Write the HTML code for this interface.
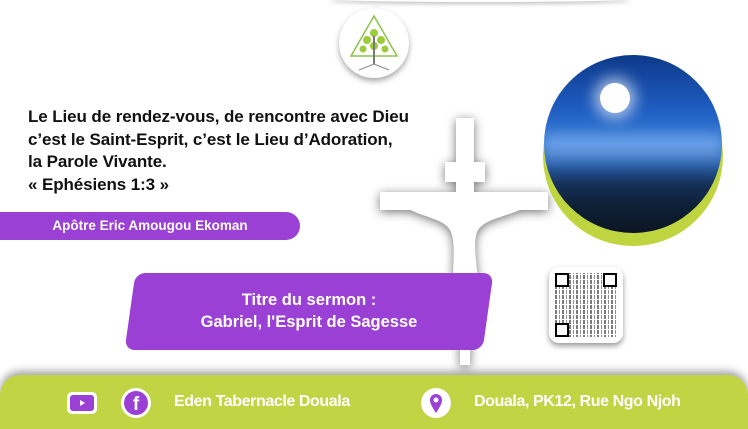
<!DOCTYPE html>
<html><head><meta charset="utf-8"><style>
body{margin:0;width:748px;height:429px;overflow:hidden;background:#fff;font-family:"Liberation Sans",sans-serif;position:relative}
.a{position:absolute}
.q{font-weight:bold;font-size:17px;color:#111;left:28px;line-height:22.5px;top:106px;letter-spacing:-.1px}
</style></head><body>
<div class="a" style="left:330px;top:-4px;width:300px;height:6px;border-radius:50%;box-shadow:0 2px 4px rgba(0,0,0,.25)"></div>
<div class="a" style="left:339px;top:8px;width:70px;height:70px;border-radius:50%;background:#fff;box-shadow:0 3px 6px rgba(0,0,0,.35)">
<svg width="70" height="70"><polygon points="35,8 58,48 12,48" fill="none" stroke="#8bc34a" stroke-width="1.5"/>
<circle cx="35" cy="25" r="4" fill="#9ccc3a"/><circle cx="28" cy="32" r="4" fill="#9ccc3a"/><circle cx="42" cy="32" r="4" fill="#9ccc3a"/><circle cx="24" cy="41" r="3.5" fill="#9ccc3a"/><circle cx="35" cy="38" r="4" fill="#9ccc3a"/><circle cx="46" cy="41" r="3.5" fill="#9ccc3a"/>
<rect x="34" y="28" width="2" height="28" fill="#777"/><path d="M20 62 L35 56 L50 62" stroke="#888" fill="none"/></svg></div>
<div class="a q">Le Lieu de rendez-vous, de rencontre avec Dieu<br>c’est le Saint-Esprit, c’est le Lieu d’Adoration,<br>la Parole Vivante.<br>« Ephésiens 1:3 »</div>
<div class="a" style="left:0;top:212px;width:300px;height:28px;background:#9a40d4;border-radius:0 14px 14px 0;color:#fff;font-weight:bold;font-size:13.5px;line-height:28px;text-align:center">Apôtre Eric Amougou Ekoman</div>
<svg class="a" style="left:370px;top:110px;filter:drop-shadow(0 2px 5px rgba(0,0,0,.55))" width="190" height="270">
<path fill="#fff" d="M86 8 H104 V52 H115 V72 H104 V82 H178 V100 H150 C130 108 115 110 108 120 C100 135 112 170 106 190 C103 205 100 220 100 255 H90 C90 220 88 205 84 190 C80 170 88 135 80 120 C74 110 58 108 40 100 H10 V82 H86 V72 H75 V52 H86 Z"/></svg>
<div class="a" style="left:543px;top:66px;width:180px;height:180px;border-radius:50%;background:#bfd53f"></div>
<div class="a" style="left:544px;top:55px;width:178px;height:178px;border-radius:50%;overflow:hidden;background:linear-gradient(#0d3a8a 0%,#1e5cc0 30%,#3a80d8 50%,#2a5fa8 62%,#15305a 72%,#0e2036 85%,#0a1522 100%)">
<div class="a" style="left:56px;top:28px;width:30px;height:30px;border-radius:50%;background:#fff;box-shadow:0 0 14px 6px rgba(255,255,255,.6)"></div>
<div class="a" style="left:0;top:78px;width:178px;height:26px;background:rgba(180,210,255,.35);filter:blur(6px)"></div>
</div>
<div class="a" style="left:130px;top:273px;width:358px;height:77px;background:#9a40d4;border-radius:10px;transform:skewX(-8deg)"></div>
<div class="a" style="left:130px;top:289px;width:358px;text-align:center;color:#fff;font-weight:bold;font-size:16.5px;line-height:22px">Titre du sermon :<br>Gabriel, l'Esprit de Sagesse</div>
<div class="a" style="left:549px;top:267px;width:74px;height:76px;background:#fff;border-radius:10px;box-shadow:0 3px 6px rgba(0,0,0,.4)">
<div class="a" style="left:6px;top:6px;width:62px;height:64px;background:repeating-linear-gradient(0deg,transparent 0 2px,#fff 2px 3px,transparent 3px 5px),repeating-linear-gradient(90deg,#222 0 2px,#fff 2px 4px,#444 4px 5px,#fff 5px 7px);opacity:.6"></div>
<div class="a" style="left:6px;top:6px;width:10px;height:10px;border:2px solid #000;background:#fff"></div>
<div class="a" style="left:54px;top:6px;width:10px;height:10px;border:2px solid #000;background:#fff"></div>
<div class="a" style="left:6px;top:56px;width:10px;height:10px;border:2px solid #000;background:#fff"></div>
</div>
<div class="a" style="left:0;top:375px;width:748px;height:54px;background:#c1d443;border-radius:20px 20px 0 0;box-shadow:0 -4px 8px rgba(0,0,0,.35)"></div>
<div class="a" style="left:67px;top:392px;width:30px;height:22px;background:#fff;border-radius:5px"><div style="margin:3px;width:24px;height:16px;background:#9a40d4;border-radius:3px;position:relative"><div style="position:absolute;left:10px;top:5px;border-left:5px solid #fff;border-top:3px solid transparent;border-bottom:3px solid transparent"></div></div></div>
<div class="a" style="left:121px;top:388px;width:30px;height:30px;border-radius:50%;background:#fff"><div style="margin:3px;width:24px;height:24px;border-radius:50%;background:#9a40d4;color:#fff;font-weight:bold;font-size:19px;text-align:center;line-height:27px">f</div></div>
<div class="a" style="left:174px;top:393px;color:#fff;font-weight:bold;font-size:16px;letter-spacing:-.4px">Eden Tabernacle Douala</div>
<div class="a" style="left:421px;top:388px;width:30px;height:30px;border-radius:50%;background:#fff"><svg width="30" height="30"><path d="M15 25 C11 19 9 15 9 12 A6 6 0 0 1 21 12 C21 15 19 19 15 25Z" fill="#9a40d4"/><circle cx="15" cy="12" r="2.5" fill="#fff"/></svg></div>
<div class="a" style="left:474px;top:393px;color:#fff;font-weight:bold;font-size:16px;letter-spacing:-.4px">Douala, PK12, Rue Ngo Njoh</div>
</body></html>
